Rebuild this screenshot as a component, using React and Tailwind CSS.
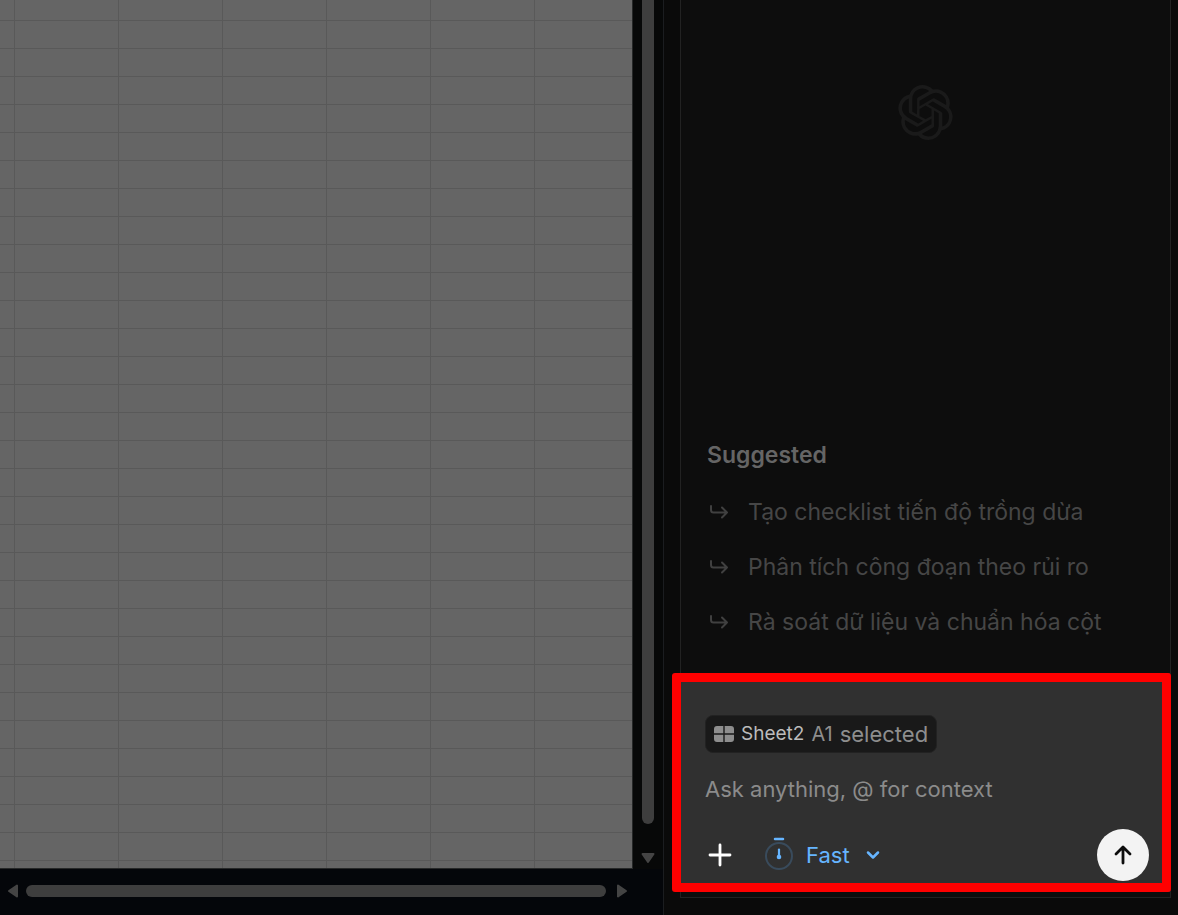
import { SiOpenai } from "react-icons/si";

const suggestions = [
  "Tạo checklist tiến độ trồng dừa",
  "Phân tích công đoạn theo rủi ro",
  "Rà soát dữ liệu và chuẩn hóa cột",
];

function ReplyArrow() {
  return (
    <svg className="h-6 w-6 shrink-0 text-[#404040]" viewBox="0 0 24 24" fill="none" stroke="currentColor" strokeWidth="2" strokeLinecap="round" strokeLinejoin="round" aria-hidden="true">
      <path d="M4 5v4a2.500 2.500 0 0 0 2.500 2.500H20M15 6.500l5 5-5 5" />
    </svg>
  );
}

function Triangle({ className }) {
  return (
    <svg className={className} viewBox="0 0 14 12" fill="currentColor" stroke="currentColor" strokeWidth="2" strokeLinejoin="round" aria-hidden="true">
      <path d="M1.500 2h11L7 10z" />
    </svg>
  );
}

function Spreadsheet() {
  return (
    <main className="flex min-w-0 flex-1 flex-col bg-[#04060a]">
      <div className="flex min-h-0 flex-1">
        <div className="min-w-0 flex-1 border-r border-b border-[#262828] bg-[#656565] bg-[linear-gradient(to_right,#595959_1px,transparent_1px),linear-gradient(to_bottom,#595959_1px,transparent_1px)] bg-[size:104px_28px] bg-[position:14px_20px]" />
        <div className="flex w-[30px] shrink-0 flex-col items-center bg-[#070808] text-[#444]">
          <div className="w-3 flex-1 rounded-b-full bg-[#3e3e3e]" />
          <div className="flex h-[45px] items-end justify-center pb-[5px]">
            <Triangle className="h-3 w-[14px]" />
          </div>
        </div>
      </div>
      <div className="flex h-[46px] items-center pr-[34px] pb-[2px] pl-[6px] text-[#444]">
        <Triangle className="h-3 w-[14px] rotate-90" />
        <div className="mr-[9px] ml-[6px] h-3 flex-1 rounded-full bg-[#3e3e3e]" />
        <Triangle className="h-3 w-[14px] -rotate-90" />
      </div>
    </main>
  );
}

function Composer() {
  return (
    <form className="relative mb-[5px] bg-[#303030] px-6 pt-[42px] pb-[11px]" onSubmit={(e) => e.preventDefault()}>
      <div className="flex h-[38px] w-fit items-center gap-[7px] rounded-lg border border-[#222] bg-[#191919] px-2 text-[#8e8e8e]">
        <svg className="h-4 w-5" viewBox="0 0 20 16" fill="currentColor" aria-hidden="true">
          <path d="M3 0h6.300v7.300H0V3a3 3 0 0 1 3-3zM10.700 0H17a3 3 0 0 1 3 3v4.300h-9.300zM0 8.700h9.300V16H3a3 3 0 0 1-3-3zM10.700 8.700H20V13a3 3 0 0 1-3 3h-6.300z" />
        </svg>
        <span className="text-[19px] text-[#bcbcbc]">Sheet2</span>
        <span className="text-[20px]">A1</span>
        <span className="text-[22px]">selected</span>
      </div>
      <input aria-label="Message" placeholder="Ask anything, @ for context" className="mt-4 block h-10 w-full bg-transparent text-[22px] text-white outline-none placeholder:text-[#8b8b8b]" />
      <div className="mt-5 flex h-[52px] items-center">
        <button type="button" aria-label="Add" className="text-white">
          <svg className="h-[30px] w-[30px]" viewBox="0 0 30 30" fill="none" stroke="currentColor" strokeWidth="2.800" strokeLinecap="round">
            <path d="M15 5v20M5 15h20" />
          </svg>
        </button>
        <button type="button" className="ml-[29px] flex items-center text-[22px] text-[#66b5ff]">
          <svg className="h-9 w-[30px]" viewBox="0 0 30 36" fill="none" stroke="currentColor" strokeLinecap="round" aria-hidden="true">
            <circle cx="15" cy="19" r="13" stroke="#394b5c" strokeWidth="2" />
            <path d="M11 2h8" strokeWidth="2.500" />
            <path d="M15 12.500V20" strokeWidth="2.200" />
            <circle cx="15" cy="20" r="2.300" fill="currentColor" stroke="none" />
          </svg>
          <span className="ml-3">Fast</span>
          <svg className="ml-4 h-3 w-[14px]" viewBox="0 0 14 12" fill="none" stroke="currentColor" strokeWidth="2.500" strokeLinecap="round" strokeLinejoin="round" aria-hidden="true">
            <path d="M2 3.500l5 5 5-5" />
          </svg>
        </button>
        <button type="submit" aria-label="Send" className="-mr-[3px] ml-auto flex h-[52px] w-[52px] items-center justify-center rounded-full bg-[#f3f3f3] text-[#0d0d0d]">
          <svg className="h-6 w-6" viewBox="0 0 24 24" fill="none" stroke="currentColor" strokeWidth="2.800" strokeLinecap="round" strokeLinejoin="round">
            <path d="M12 20V4.500M5 11l7-7 7 7" />
          </svg>
        </button>
      </div>
      <div className="pointer-events-none absolute top-0 -right-px bottom-0 -left-[9px] rounded-[3px] border-[9px] border-[#ff0000]" />
    </form>
  );
}

export default function App() {
  return (
    <div className="flex h-screen bg-black font-['Inter',sans-serif]">
      <Spreadsheet />
      <aside className="flex w-[515px] shrink-0 flex-col border-l border-[#1b1d20] bg-[#0a0a0a] pr-[7px] pb-[17px] pl-4">
        <section className="flex flex-1 flex-col border-x border-b border-[#222] bg-[#0d0d0d]">
          <div className="flex justify-center pt-[85px]">
            <SiOpenai className="h-[55px] w-[55px] text-[#1a1a1a]" aria-hidden="true" />
          </div>
          <div className="mt-auto px-[26px] pb-[23px]">
            <h2 className="text-[23px] leading-8 font-semibold text-[#656565]">Suggested</h2>
            <ul className="mt-[14px]">
              {suggestions.map((text) => (
                <li key={text}>
                  <button type="button" className="flex h-[55px] w-full items-center gap-[17px] text-left text-[23px] whitespace-nowrap text-[#464646]">
                    <ReplyArrow />
                    {text}
                  </button>
                </li>
              ))}
            </ul>
          </div>
          <Composer />
        </section>
      </aside>
    </div>
  );
}
